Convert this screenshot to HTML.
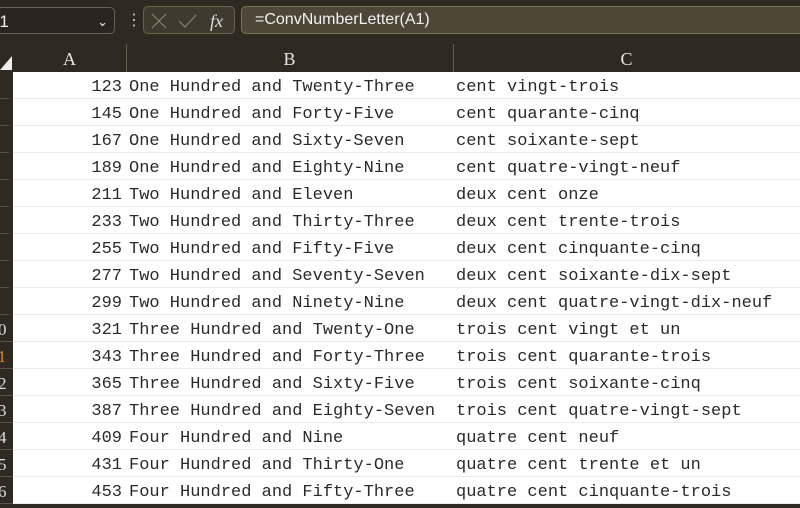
<!DOCTYPE html><html><head><style>
body{margin:0;width:800px;height:500px;overflow:hidden;background:#2e2921;font-family:"Liberation Mono",monospace;}
.abs{position:absolute}
.row{position:absolute;left:13px;width:787px;height:27px;background:#fff;border-bottom:1px solid #ecebe6;box-sizing:border-box;font-size:17px;color:#2a2a2a;line-height:31px}
.row span{position:absolute;top:0;white-space:pre;font-family:"Liberation Mono",monospace}
.rhc{position:absolute;left:0;width:13px;top:72px;height:432px;overflow:hidden}
.rh{position:absolute;left:-21px;width:30px;height:27px;border-bottom:1px solid #5a5245;box-sizing:border-box;color:#ddd;font-size:17px;line-height:29px;text-align:center;font-family:"Liberation Serif",serif}
.rh.w{left:-19px;width:34px}
</style></head><body>
<div class="abs" style="left:-17px;top:7px;width:132px;height:27px;border:1px solid #6a6250;border-radius:5px;background:#2a251e;color:#eee;font:17px 'Liberation Sans',sans-serif;line-height:27px;padding-left:4px;box-sizing:border-box">A1<span style="position:absolute;right:6px;top:0;font-size:13px">&#8964;</span></div>
<div class="abs" style="left:126px;top:10px;color:#ccc;font:16px 'Liberation Sans';">&#8942;</div>
<div class="abs" style="left:143px;top:6px;width:92px;height:28px;border:1px solid #6a6250;border-radius:5px;background:#3f3a2e;box-sizing:border-box">
<svg width="92" height="28" style="position:absolute;left:0;top:0"><path d="M8 7 L22 21 M22 7 L8 21" stroke="#8a8270" stroke-width="1.2"/><path d="M35 14 L41 20 L52 8" stroke="#8a8270" stroke-width="1.2" fill="none"/><text x="66" y="20" fill="#ddd" font-family="Liberation Serif" font-style="italic" font-size="18">fx</text></svg></div>
<div class="abs" style="left:241px;top:6px;width:570px;height:28px;border:1px solid #7a7260;border-radius:5px;background:#4e4737;box-sizing:border-box;color:#f2f2f2;font:16px 'Liberation Sans',sans-serif;line-height:26px;padding-left:13px">=ConvNumberLetter(A1)</div>
<div class="abs" style="left:0;top:44px;width:800px;height:28px;background:#2e2921;color:#e8e8e8;font:18px 'Liberation Serif',serif;line-height:30px">
<svg class="abs" style="left:0;top:4px" width="13" height="22"><path d="M0 22 L12 22 L12 8 Z" fill="#eee"/></svg>
<div class="abs" style="left:13px;width:113px;text-align:center">A</div>
<div class="abs" style="left:126px;top:0;width:1px;height:28px;background:#6a6250"></div>
<div class="abs" style="left:126px;width:327px;text-align:center">B</div>
<div class="abs" style="left:453px;top:0;width:1px;height:28px;background:#6a6250"></div>
<div class="abs" style="left:453px;width:347px;text-align:center">C</div>
</div>
<div class="rhc" id="r"></div>
<div id="g"></div>
<script>
var d=[["123","One Hundred and Twenty-Three","cent vingt-trois"],["145","One Hundred and Forty-Five","cent quarante-cinq"],["167","One Hundred and Sixty-Seven","cent soixante-sept"],["189","One Hundred and Eighty-Nine","cent quatre-vingt-neuf"],["211","Two Hundred and Eleven","deux cent onze"],["233","Two Hundred and Thirty-Three","deux cent trente-trois"],["255","Two Hundred and Fifty-Five","deux cent cinquante-cinq"],["277","Two Hundred and Seventy-Seven","deux cent soixante-dix-sept"],["299","Two Hundred and Ninety-Nine","deux cent quatre-vingt-dix-neuf"],["321","Three Hundred and Twenty-One","trois cent vingt et un"],["343","Three Hundred and Forty-Three","trois cent quarante-trois"],["365","Three Hundred and Sixty-Five","trois cent soixante-cinq"],["387","Three Hundred and Eighty-Seven","trois cent quatre-vingt-sept"],["409","Four Hundred and Nine","quatre cent neuf"],["431","Four Hundred and Thirty-One","quatre cent trente et un"],["453","Four Hundred and Fifty-Three","quatre cent cinquante-trois"]];
var h="",r="";d.forEach(function(x,i){var t=72+i*27;r+='<div class="rh'+(i>=9?' w':'')+'" style="top:'+(i*27)+'px;'+(i==10?'color:#d98a2a':'')+'">'+(i+1)+'</div>';h+='<div class="row" style="top:'+t+'px"><span style="right:678px">'+x[0]+'</span><span style="left:116px">'+x[1]+'</span><span style="left:443px">'+x[2]+'</span></div>';});
document.getElementById("g").innerHTML=h;document.getElementById("r").innerHTML=r;
</script>
</body></html>
